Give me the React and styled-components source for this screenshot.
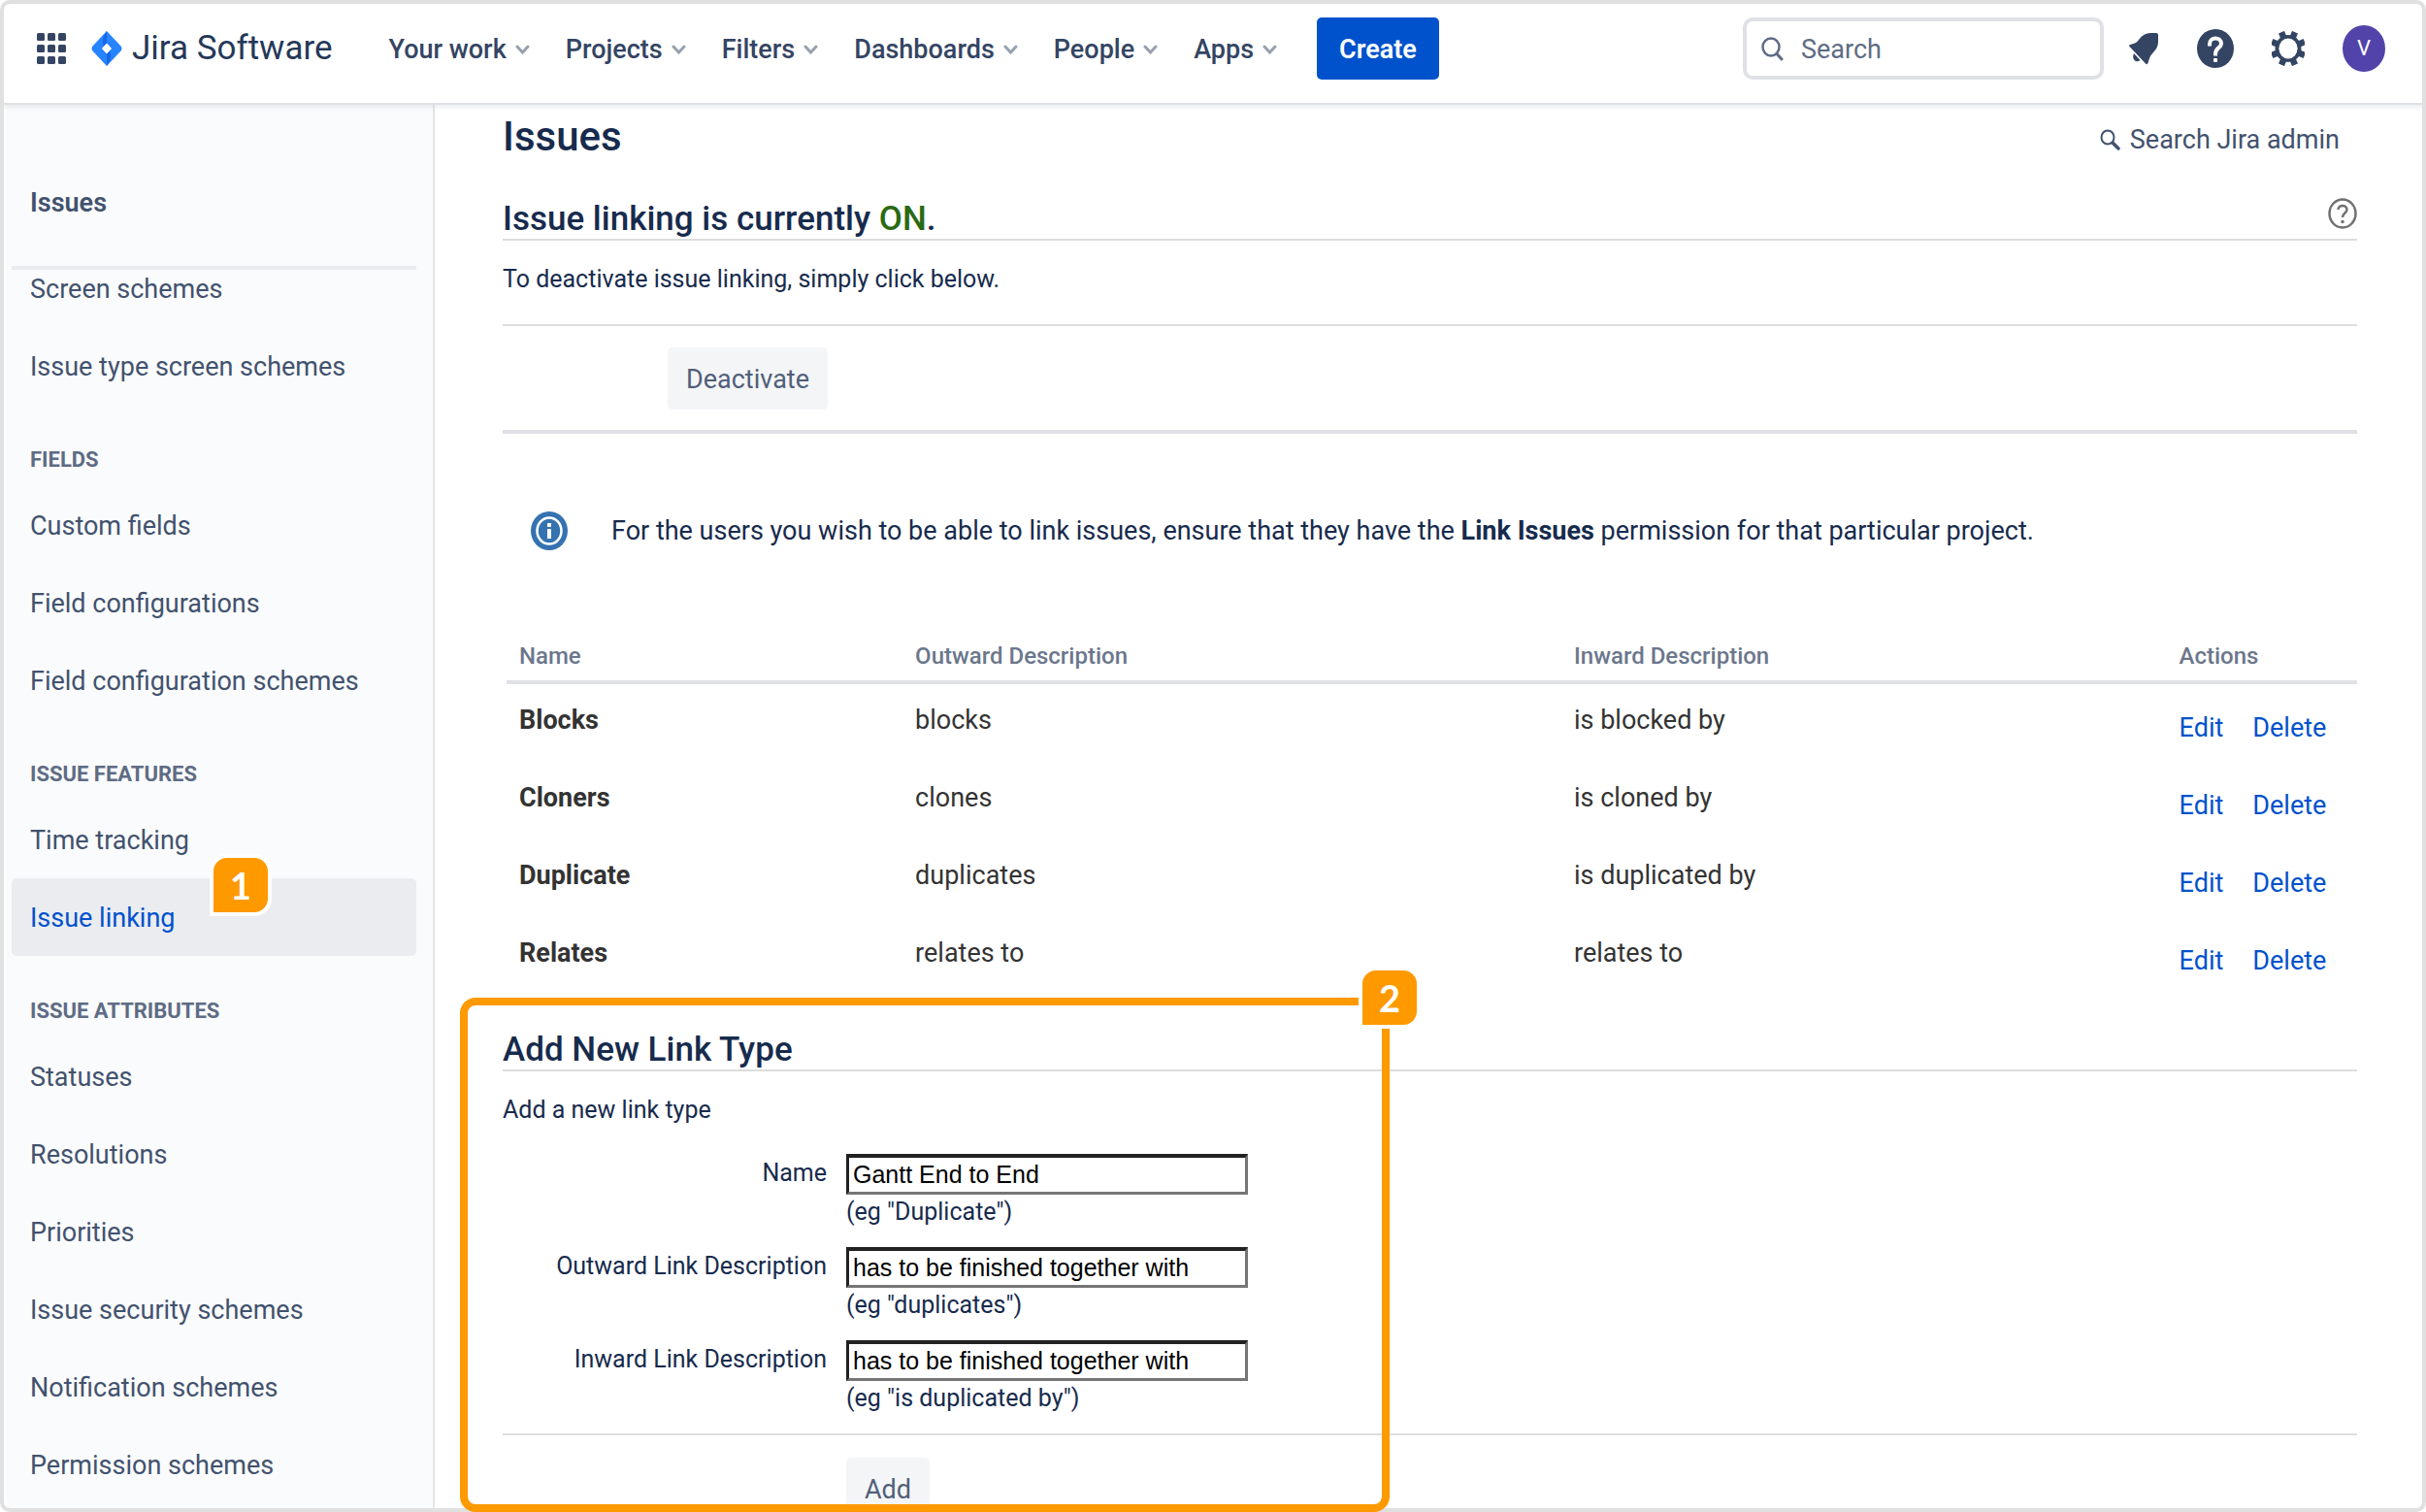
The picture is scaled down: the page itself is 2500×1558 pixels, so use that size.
import styled, { createGlobalStyle } from "styled-components";

const NAV_ITEMS = ["Your work", "Projects", "Filters", "Dashboards", "People", "Apps"];

const SIDE_GROUPS = [
  { title: "", items: ["Screen schemes", "Issue type screen schemes"] },
  {
    title: "Fields",
    items: ["Custom fields", "Field configurations", "Field configuration schemes"],
  },
  { title: "Issue features", items: ["Time tracking", "Issue linking"] },
  {
    title: "Issue attributes",
    items: [
      "Statuses",
      "Resolutions",
      "Priorities",
      "Issue security schemes",
      "Notification schemes",
      "Permission schemes",
    ],
  },
];

const LINK_TYPES = [
  { name: "Blocks", outward: "blocks", inward: "is blocked by" },
  { name: "Cloners", outward: "clones", inward: "is cloned by" },
  { name: "Duplicate", outward: "duplicates", inward: "is duplicated by" },
  { name: "Relates", outward: "relates to", inward: "relates to" },
];

const FIELDS = [
  { id: "name", label: "Name", value: "Gantt End to End", hint: '(eg "Duplicate")' },
  {
    id: "outward",
    label: "Outward Link Description",
    value: "has to be finished together with",
    hint: '(eg "duplicates")',
  },
  {
    id: "inward",
    label: "Inward Link Description",
    value: "has to be finished together with",
    hint: '(eg "is duplicated by")',
  },
];

const SwitcherIcon = () => (
  <svg width="30" height="32" viewBox="0 0 30 32" fill="#344563">
    {[0, 11, 22].map((x) =>
      [0, 12, 24].map((y) => (
        <rect key={`${x}-${y}`} x={x} y={y} width="8" height="8" rx="1.5" />
      ))
    )}
  </svg>
);

const JiraIcon = () => (
  <svg width="32" height="36" viewBox="0 0 32 36">
    <path d="M16 0 L31 16 Q32 18 31 20 L16 36 L1 20 Q0 18 1 16 Z" fill="#2684ff" />
    <path d="M16 0 V13 L13 15.5 C10.5 11 12 6 16 0 Z" fill="#1868e8" />
    <path d="M16 36 V23 L19 20.5 C21.500 25 20 30 16 36 Z" fill="#1868e8" />
    <path d="M16 13 L20.500 18 L16 23 L11.500 18 Z" fill="#fff" stroke="#fff" strokeLinejoin="round" />
  </svg>
);

const Chevron = () => (
  <svg width="15" height="10" viewBox="0 0 15 10" fill="none">
    <path d="M2 2 L7.500 8 L13 2" stroke="#97a0af" strokeWidth="3" strokeLinecap="round" />
  </svg>
);

const SearchIcon = () => (
  <svg width="23" height="25" viewBox="0 0 23 25" fill="none" stroke="#5e6c84" strokeLinecap="round">
    <ellipse cx="10" cy="10.500" rx="8.500" ry="9" strokeWidth="2.500" />
    <path d="M16 17.500 L21 23" strokeWidth="3" />
  </svg>
);

const AdminSearchIcon = () => (
  <svg width="21" height="22" viewBox="0 0 21 22" fill="none" stroke="#42526e" strokeLinecap="round">
    <ellipse cx="8" cy="8.500" rx="6.500" ry="7" strokeWidth="2" />
    <path d="M13.500 14.500 L19 20" strokeWidth="3.500" />
  </svg>
);

const BellIcon = () => (
  <svg width="31" height="33" viewBox="0 0 31 33" fill="#344563">
    <path d="M1 12 L6 10.500 Q8 10 10 7 Q15 0 22 0 L28 0 Q30 0 30 2 L30 9 Q30 15 25 20 Q22 23 21 26 L19.500 31 Q18.500 33 17 31.500 L0.500 14 Q-0.500 12.500 1 12 Z" />
    <path d="M5 21 L11.500 28 Q8 30.500 5.500 28 Q3 25 5 21 Z" />
  </svg>
);

const HelpIcon = () => (
  <svg width="38" height="40" viewBox="0 0 38 40" fill="none">
    <ellipse cx="19" cy="20" rx="19" ry="20" fill="#344563" />
    <path
      d="M13 15.500 C13 7.500 25 7.500 25 15 C25 19.500 19 19 19 25.500"
      stroke="#fff"
      strokeWidth="4"
      strokeLinecap="square"
    />
    <rect x="17" y="30" width="4" height="4" rx="1" fill="#fff" />
  </svg>
);

const GearIcon = () => (
  <svg width="34" height="36" viewBox="0 0 34 36" fill="none" stroke="#344563">
    <ellipse cx="17" cy="18" rx="11.500" ry="12" strokeWidth="4" />
    {[22.5, 67.5, 112.5, 157.5, 202.5, 247.5, 292.5, 337.5].map((angle) => (
      <path
        key={angle}
        d="M17 5.500 V3"
        strokeWidth="6.500"
        strokeLinecap="square"
        strokeLinejoin="round"
        transform={`rotate(${angle} 17 18)`}
      />
    ))}
    <ellipse cx="17" cy="18" rx="9.500" ry="10.500" fill="#fff" stroke="none" />
  </svg>
);

const OutlineHelpIcon = () => (
  <svg width="30" height="32" viewBox="0 0 30 32" fill="none" stroke="#707070">
    <ellipse cx="15" cy="16" rx="13.500" ry="14.500" strokeWidth="2.500" />
    <path
      d="M10.500 12 C10.500 6.500 19.500 6.500 19.500 12 C19.500 15.500 15 15.500 15 20"
      strokeWidth="2.500"
    />
    <circle cx="15" cy="24.500" r="1" strokeWidth="1.500" fill="#707070" />
  </svg>
);

const InfoIcon = () => (
  <svg width="38" height="40" viewBox="0 0 38 40">
    <ellipse cx="19" cy="20" rx="19" ry="20" fill="#3572b0" />
    <ellipse cx="19" cy="20" rx="12.500" ry="13.500" fill="none" stroke="#fff" strokeWidth="2.500" />
    <rect x="17" y="12" width="4" height="4" fill="#fff" />
    <rect x="17" y="18" width="4" height="10" fill="#fff" />
  </svg>
);

const App = () => {
  return (
    <Frame>
      <GlobalStyle />
      <Header>
        <IconButton aria-label="Switch to">
          <SwitcherIcon />
        </IconButton>
        <Logo href="#">
          <JiraIcon />
          Jira Software
        </Logo>
        <Nav>
          {NAV_ITEMS.map((item) => (
            <NavButton key={item}>
              {item}
              <Chevron />
            </NavButton>
          ))}
        </Nav>
        <CreateButton>Create</CreateButton>
        <HeaderTools>
          <SearchBox>
            <SearchIcon />
            <SearchInput type="search" placeholder="Search" aria-label="Search" />
          </SearchBox>
          <ToolIcons>
            <IconButton aria-label="Notifications">
              <BellIcon />
            </IconButton>
            <IconButton aria-label="Help">
              <HelpIcon />
            </IconButton>
            <IconButton aria-label="Settings">
              <GearIcon />
            </IconButton>
            <Avatar>V</Avatar>
          </ToolIcons>
        </HeaderTools>
      </Header>

      <Body>
        <Sidebar>
          <SideTitle>Issues</SideTitle>
          <SideNav>
            {SIDE_GROUPS.map((group) => (
              <div key={group.items[0]}>
                {group.title && <GroupTitle>{group.title}</GroupTitle>}
                {group.items.map((item) => (
                  <SideLink key={item} href="#" $active={item === "Issue linking"}>
                    {item}
                    {item === "Issue linking" && <SideMarker>1</SideMarker>}
                  </SideLink>
                ))}
              </div>
            ))}
          </SideNav>
        </Sidebar>

        <Main>
          <TitleRow>
            <PageTitle>Issues</PageTitle>
            <AdminSearch href="#">
              <AdminSearchIcon />
              Search Jira admin
            </AdminSearch>
          </TitleRow>

          <SectionHead>
            <SectionTitle>
              Issue linking is currently <On>ON</On>.
            </SectionTitle>
            <IconButton aria-label="Get help">
              <OutlineHelpIcon />
            </IconButton>
          </SectionHead>
          <Text>To deactivate issue linking, simply click below.</Text>
          <DeactivateRow>
            <GreyButton>Deactivate</GreyButton>
          </DeactivateRow>

          <Info>
            <InfoIcon />
            <p>
              For the users you wish to be able to link issues, ensure that they have the{" "}
              <strong>Link Issues</strong> permission for that particular project.
            </p>
          </Info>

          <Table>
            <thead>
              <tr>
                <HeadCell $width="21.4%">Name</HeadCell>
                <HeadCell $width="35.6%">Outward Description</HeadCell>
                <HeadCell $width="32.7%">Inward Description</HeadCell>
                <HeadCell $width="10.3%">Actions</HeadCell>
              </tr>
            </thead>
            <tbody>
              {LINK_TYPES.map((type) => (
                <tr key={type.name}>
                  <Cell>
                    <strong>{type.name}</strong>
                  </Cell>
                  <Cell>{type.outward}</Cell>
                  <Cell>{type.inward}</Cell>
                  <ActionCell>
                    <ActionLink href="#">Edit</ActionLink>
                    <ActionLink href="#">Delete</ActionLink>
                  </ActionCell>
                </tr>
              ))}
            </tbody>
          </Table>

          <AddSection>
            <Highlight>
              <BoxMarker>2</BoxMarker>
            </Highlight>
            <SectionHead>
              <SectionTitle>Add New Link Type</SectionTitle>
            </SectionHead>
            <Text>Add a new link type</Text>
            <form onSubmit={(e) => e.preventDefault()}>
              {FIELDS.map((field) => (
                <Field key={field.id}>
                  <FieldLabel htmlFor={field.id}>{field.label}</FieldLabel>
                  <div>
                    <FieldInput id={field.id} type="text" defaultValue={field.value} />
                    <Hint>{field.hint}</Hint>
                  </div>
                </Field>
              ))}
              <AddRow>
                <GreyButton type="submit">Add</GreyButton>
              </AddRow>
            </form>
          </AddSection>
        </Main>
      </Body>
    </Frame>
  );
};

export default App;

const GlobalStyle = createGlobalStyle`
  * {
    box-sizing: border-box;
  }

  body {
    margin: 0;
    background-color: #ffffff;
    color: #172b4d;
    font-family: Roboto, "Liberation Sans", sans-serif;
    font-size: 27px;
    line-height: 32px;
  }

  h1, h2, p {
    margin: 0;
  }

  a {
    color: inherit;
    text-decoration: none;
  }

  button {
    padding: 0;
    border: 0;
    background: none;
    color: inherit;
    font: inherit;
    cursor: pointer;
  }

  svg {
    display: block;
    flex-shrink: 0;
  }
`;

const Frame = styled.div`
  position: relative;
  display: flex;
  flex-direction: column;
  height: 100vh;
  overflow: hidden;

  &::after {
    content: "";
    position: absolute;
    inset: 0;
    border: 4px solid #e0e0e0;
    border-radius: 10px;
    pointer-events: none;
  }
`;

const Header = styled.header`
  position: relative;
  display: flex;
  align-items: center;
  flex-shrink: 0;
  height: 108px;
  padding: 0 42px 6px 38px;
  border-bottom: 2px solid #dfe1e6;
  box-shadow: 0 3px 5px rgba(9, 30, 66, 0.08);
`;

const IconButton = styled.button`
  display: flex;
`;

const Logo = styled.a`
  display: flex;
  align-items: center;
  gap: 10px;
  margin-left: 26px;
  color: #253858;
  font-size: 35px;
`;

const Nav = styled.nav`
  display: flex;
  gap: 37px;
  margin-left: 58px;
  padding-top: 2px;
`;

const NavButton = styled.button`
  display: flex;
  align-items: center;
  gap: 9px;
  color: #344563;
  font-weight: 500;
`;

const CreateButton = styled.button`
  height: 64px;
  margin-left: 41px;
  padding: 2px 23px 0;
  border-radius: 5px;
  background-color: #0052cc;
  color: #ffffff;
  font-weight: 600;
`;

const HeaderTools = styled.div`
  display: flex;
  align-items: center;
  gap: 26px;
  margin-left: auto;
`;

const SearchBox = styled.label`
  display: flex;
  align-items: center;
  gap: 18px;
  width: 372px;
  height: 64px;
  padding: 0 15px;
  border: 4px solid #dfe1e6;
  border-radius: 10px;
`;

const SearchInput = styled.input`
  flex: 1;
  min-width: 0;
  padding: 2px 0 0;
  border: 0;
  outline: 0;
  background: none;
  color: #172b4d;
  font: inherit;

  &::placeholder {
    color: #5e6c84;
    opacity: 1;
  }
`;

const ToolIcons = styled.div`
  display: flex;
  align-items: center;
  gap: 39px;
`;

const Avatar = styled.button`
  width: 44px;
  height: 48px;
  border-radius: 50%;
  background-color: #5243aa;
  color: #ffffff;
  font-size: 22px;
`;

const Body = styled.div`
  display: flex;
  flex: 1;
  min-height: 0;
`;

const Sidebar = styled.aside`
  flex-shrink: 0;
  width: 442px;
  margin-left: 6px;
  padding: 0 17px 0 6px;
  border-right: 2px solid #e4e5e9;
  background-color: #fafbfc;
  color: #42526e;
`;

const SideTitle = styled.div`
  padding: 85px 19px 49px;
  border-bottom: 4px solid #ebecf0;
  font-weight: 600;
`;

// the list is scrolled a little way under the title
const SideNav = styled.nav`
  margin-top: -21px;
`;

const GroupTitle = styled.div`
  padding: 43px 19px 13px;
  color: #5e6c84;
  font-size: 22px;
  font-weight: 700;
  line-height: 28px;
  text-transform: uppercase;
`;

const SideLink = styled.a`
  position: relative;
  display: block;
  padding: 25px 19px 23px;
  border-radius: 5px;
  background-color: ${({ $active }) => ($active ? "#ebecf0" : "transparent")};
  color: ${({ $active }) => ($active ? "#0052cc" : "inherit")};
`;

const Marker = styled.span`
  position: absolute;
  width: 64px;
  height: 64px;
  border: 4px solid #ffffff;
  border-radius: 18px 18px 18px 0;
  background-color: #ff9900;
  color: #ffffff;
  font-family: Lato, sans-serif;
  font-size: 38px;
  font-weight: 700;
  line-height: 56px;
  text-align: center;
`;

const SideMarker = styled(Marker)`
  top: -25px;
  left: 204px;
`;

const BoxMarker = styled(Marker)`
  top: -40px;
  right: -40px;
`;

const Main = styled.main`
  display: flex;
  flex: 1;
  flex-direction: column;
  min-width: 0;
  padding: 0 71px 0 70px;
`;

const TitleRow = styled.div`
  display: flex;
  align-items: baseline;
  justify-content: space-between;
`;

const PageTitle = styled.h1`
  font-size: 42px;
  font-weight: 500;
  line-height: 66px;
`;

const AdminSearch = styled.a`
  display: flex;
  align-items: center;
  gap: 10px;
  margin-right: 18px;
  color: #42526e;
`;

const SectionHead = styled.div`
  display: flex;
  align-items: flex-start;
  justify-content: space-between;
  margin-top: 30px;
  border-bottom: 2px solid #dddddd;
`;

const SectionTitle = styled.h2`
  padding-top: 2px;
  font-size: 35px;
  font-weight: 500;
  line-height: 40px;
`;

const On = styled.span`
  color: #2a6a14;
`;

const Text = styled.p`
  margin-top: 24px;
  font-size: 25px;
`;

const DeactivateRow = styled.div`
  margin-top: 30px;
  padding: 22px 0 21px 170px;
  border-top: 2px solid #dddddd;
  border-bottom: 4px solid #dfe1e6;
`;

const GreyButton = styled.button`
  display: block;
  height: 64px;
  padding: 2px 19px 0;
  border-radius: 5px;
  background-color: #f4f5f7;
  color: #505f79;
`;

const Info = styled.div`
  display: flex;
  align-items: center;
  gap: 45px;
  margin-top: 80px;
  padding-left: 29px;
`;

const Table = styled.table`
  width: calc(100% - 4px);
  margin: 93px 0 0 4px;
  border-spacing: 0;
  color: #333333;
  table-layout: fixed;
`;

const HeadCell = styled.th`
  width: ${({ $width }) => $width};
  padding: 0 13px 9px;
  border-bottom: 4px solid #dfe1e6;
  color: #6b778c;
  font-size: 24px;
  font-weight: 500;
  text-align: left;
`;

const Cell = styled.td`
  padding: 21px 13px 27px;
  vertical-align: top;
`;

const ActionCell = styled(Cell)`
  padding: 29px 0 19px 13px;
  white-space: nowrap;
`;

const ActionLink = styled.a`
  margin-right: 30px;
  color: #0052cc;
`;

const AddSection = styled.section`
  position: relative;
  flex: 1;
  min-height: 0;
  padding-top: 5px;
`;

const Highlight = styled.div`
  position: absolute;
  z-index: 1;
  top: 3px;
  bottom: 0;
  left: -44px;
  width: 958px;
  border: 8px solid #ff9900;
  border-radius: 16px;
  pointer-events: none;
`;

const Field = styled.div`
  display: grid;
  grid-template-columns: 334px 1fr;
  column-gap: 20px;
  margin: 29px 0 20px;

  & + & {
    margin-top: 0;
  }
`;

const FieldLabel = styled.label`
  font-size: 25px;
  line-height: 40px;
  text-align: right;
`;

const FieldInput = styled.input`
  display: block;
  width: 414px;
  height: 42px;
  padding: 0 4px;
  border: 3px solid;
  border-top-width: 4px;
  border-color: #222222 #767676 #767676 #222222;
  border-radius: 0;
  background-color: #ffffff;
  color: #000000;
  font-family: "Liberation Sans", Arial, sans-serif;
  font-size: 25px;
`;

const Hint = styled.div`
  padding-top: 2px;
  font-size: 25px;
`;

const AddRow = styled.div`
  padding: 23px 0 0 354px;
  border-top: 2px solid #dddddd;
`;
